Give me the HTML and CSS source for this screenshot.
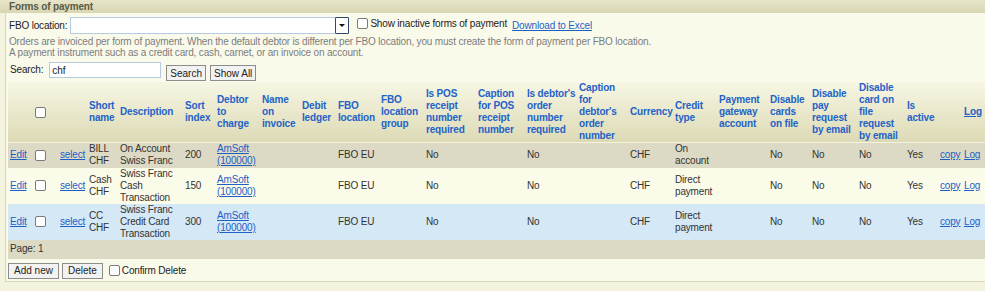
FILE: index.html
```html
<!DOCTYPE html>
<html lang="en">
<head>
    <meta charset="UTF-8">
    <title>Forms of payment</title>
    <link rel="stylesheet" href="styles.css">
</head>
<body>
    <div class="panel-title">Forms of payment</div>
    <div class="panel">
        <div class="filter-row">
            <label class="field-label">FBO location:</label>
            <div class="select-box"><span class="select-arrow"></span></div>
            <label class="check-label"><input type="checkbox" class="check"> Show inactive forms of payment</label>
            <a href="#" class="link">Download to Excel</a>
        </div>
        <p class="hint">
            Orders are invoiced per form of payment. When the default debtor is different per FBO location, you must create the form of payment per FBO location.<br>
            A payment instrument such as a credit card, cash, carnet, or an invoice on account.
        </p>
        <div class="search-row">
            <label class="search-label">Search:</label>
            <input type="text" class="search-input" value="chf">
            <button class="btn">Search</button>
            <button class="btn">Show All</button>
        </div>

        <table class="grid">
            <colgroup>
                <col style="width:25px"><col style="width:25px"><col style="width:29px"><col style="width:31px">
                <col style="width:65px"><col style="width:32px"><col style="width:45px"><col style="width:40px">
                <col style="width:36px"><col style="width:43px"><col style="width:45px"><col style="width:52px">
                <col style="width:49px"><col style="width:52px"><col style="width:51px"><col style="width:45px">
                <col style="width:44px"><col style="width:51px"><col style="width:42px"><col style="width:47px">
                <col style="width:48px"><col style="width:33px"><col style="width:24px"><col style="width:23px">
            </colgroup>
            <thead>
                <tr>
                    <th></th>
                    <th><input type="checkbox" class="check"></th>
                    <th></th>
                    <th>Short<br>name</th>
                    <th>Description</th>
                    <th>Sort<br>index</th>
                    <th>Debtor<br>to<br>charge</th>
                    <th>Name<br>on<br>invoice</th>
                    <th>Debit<br>ledger</th>
                    <th>FBO<br>location</th>
                    <th>FBO<br>location<br>group</th>
                    <th>Is POS<br>receipt<br>number<br>required</th>
                    <th>Caption<br>for POS<br>receipt<br>number</th>
                    <th>Is debtor's<br>order<br>number<br>required</th>
                    <th>Caption<br>for<br>debtor's<br>order<br>number</th>
                    <th>Currency</th>
                    <th>Credit<br>type</th>
                    <th>Payment<br>gateway<br>account</th>
                    <th>Disable<br>cards<br>on file</th>
                    <th>Disable<br>pay<br>request<br>by email</th>
                    <th>Disable<br>card on<br>file<br>request<br>by email</th>
                    <th>Is<br>active</th>
                    <th></th>
                    <th><a href="#" class="link">Log</a></th>
                </tr>
            </thead>
            <tbody>
                <tr class="row-alt">
                    <td><a href="#" class="link">Edit</a></td>
                    <td><input type="checkbox" class="check"></td>
                    <td><a href="#" class="link">select</a></td>
                    <td>BILL<br>CHF</td>
                    <td>On Account<br>Swiss Franc</td>
                    <td>200</td>
                    <td><a href="#" class="link">AmSoft<br>(100000)</a></td>
                    <td></td>
                    <td></td>
                    <td>FBO EU</td>
                    <td></td>
                    <td>No</td>
                    <td></td>
                    <td>No</td>
                    <td></td>
                    <td>CHF</td>
                    <td>On<br>account</td>
                    <td></td>
                    <td>No</td>
                    <td>No</td>
                    <td>No</td>
                    <td>Yes</td>
                    <td><a href="#" class="link">copy</a></td>
                    <td><a href="#" class="link">Log</a></td>
                </tr>
                <tr class="row">
                    <td><a href="#" class="link">Edit</a></td>
                    <td><input type="checkbox" class="check"></td>
                    <td><a href="#" class="link">select</a></td>
                    <td>Cash<br>CHF</td>
                    <td>Swiss Franc<br>Cash<br>Transaction</td>
                    <td>150</td>
                    <td><a href="#" class="link">AmSoft<br>(100000)</a></td>
                    <td></td>
                    <td></td>
                    <td>FBO EU</td>
                    <td></td>
                    <td>No</td>
                    <td></td>
                    <td>No</td>
                    <td></td>
                    <td>CHF</td>
                    <td>Direct<br>payment</td>
                    <td></td>
                    <td>No</td>
                    <td>No</td>
                    <td>No</td>
                    <td>Yes</td>
                    <td><a href="#" class="link">copy</a></td>
                    <td><a href="#" class="link">Log</a></td>
                </tr>
                <tr class="row-selected">
                    <td><a href="#" class="link">Edit</a></td>
                    <td><input type="checkbox" class="check"></td>
                    <td><a href="#" class="link">select</a></td>
                    <td>CC<br>CHF</td>
                    <td>Swiss Franc<br>Credit Card<br>Transaction</td>
                    <td>300</td>
                    <td><a href="#" class="link">AmSoft<br>(100000)</a></td>
                    <td></td>
                    <td></td>
                    <td>FBO EU</td>
                    <td></td>
                    <td>No</td>
                    <td></td>
                    <td>No</td>
                    <td></td>
                    <td>CHF</td>
                    <td>Direct<br>payment</td>
                    <td></td>
                    <td>No</td>
                    <td>No</td>
                    <td>No</td>
                    <td>Yes</td>
                    <td><a href="#" class="link">copy</a></td>
                    <td><a href="#" class="link">Log</a></td>
                </tr>
            </tbody>
            <tfoot>
                <tr class="pager">
                    <td colspan="24">Page: 1</td>
                </tr>
            </tfoot>
        </table>

        <div class="actions">
            <button class="btn">Add new</button>
            <button class="btn">Delete</button>
            <label class="check-label"><input type="checkbox" class="check"> Confirm Delete</label>
        </div>
    </div>
</body>
</html>
```
FILE: styles.css
```css
body {
    margin: 0;
    background-color: #f4f4de;
    font-family: "Liberation Sans", Arial, sans-serif;
    font-size: 10px;
    letter-spacing: -0.17px;
    color: #222;
}
.panel-title {
    height: 13px;
    line-height: 13px;
    padding-left: 9px;
    font-weight: bold;
    color: #5a5a44;
    background: linear-gradient(#e6e5c9, #d8d6b3);
}
.panel {
    margin-left: 5px;
    padding: 4px 0 1px 1px;
    background-color: #fafaeb;
    border-left: 1px solid #d9d8b6;
    border-bottom: 1px solid #d9d8b6;
}
.filter-row {
    display: flex;
    align-items: center;
    height: 17px;
    padding-left: 2px;
}
.select-box {
    width: 277px;
    height: 15px;
    margin-left: 3px;
    display: flex;
    justify-content: flex-end;
    background-color: white;
    border: 1px solid #b5cbe5;
}
.select-arrow {
    position: relative;
    width: 12px;
    height: 15px;
    margin: -1px -1px 0 0;
    background-color: white;
    border: 1px solid #34466c;
    border-radius: 1px;
}
.select-arrow::after {
    content: "";
    position: absolute;
    left: 3px;
    top: 6px;
    border-left: 3px solid transparent;
    border-right: 3px solid transparent;
    border-top: 3px solid #111;
}
.check {
    appearance: none;
    width: 11px;
    height: 11px;
    margin: 0;
    background-color: white;
    border: 1px solid #7a7a7a;
    border-radius: 2px;
    vertical-align: middle;
}
.check-label {
    display: inline-flex;
    align-items: center;
    gap: 2px;
    margin-left: 8px;
}
.filter-row .check-label {
    margin-top: -5px;
}
.filter-row .link {
    margin-left: 5px;
    margin-top: -1px;
}
.link {
    color: #1e5fc6;
    text-decoration: underline;
}
.hint {
    margin: 2px 0 0 2px;
    line-height: 11px;
    color: #7d7d7d;
}
.search-row {
    display: flex;
    align-items: flex-start;
    margin-top: 4px;
    height: 18px;
}
.search-label {
    line-height: 16px;
    margin-left: 3px;
}
.search-input {
    width: 106px;
    height: 14px;
    margin: 0 0 0 6px;
    padding: 0 2px;
    border: 1px solid #b5cbe5;
    font: inherit;
    color: #222;
}
.btn {
    height: 16px;
    margin: 3px 0 0 4px;
    padding: 0 4px;
    background-color: #f2f2f2;
    border: 1px solid #8c8c8c;
    border-radius: 0;
    font: inherit;
    line-height: 13px;
    color: #222;
}
.search-row .btn {
    padding: 0 3px;
}
.search-row .search-input + .btn {
    margin-left: 5px;
}
.grid {
    width: 977px;
    margin: 2px 0 0 1px;
    table-layout: fixed;
    border-collapse: collapse;
    line-height: 12px;
}
.grid th, .grid td {
    padding: 0 2px;
    text-align: left;
    vertical-align: middle;
    white-space: nowrap;
}
.grid thead tr {
    height: 60px;
    background: linear-gradient(#f7f6e3, #dcdab5);
    border-bottom: 1px solid #f4f3dc;
}
.grid th {
    font-weight: bold;
    color: #2462c8;
}
.grid td {
    color: #333;
}
.row-alt, .pager {
    background-color: #dcdac5;
}
.row-alt {
    height: 25px;
}
.row {
    background-color: #fbfbea;
}
.row-selected {
    background-color: #d4e8f6;
}
.pager td {
    height: 19px;
}
.actions {
    display: flex;
    align-items: center;
    margin-top: 3px;
    height: 18px;
}
.actions .btn {
    margin-top: 0;
    margin-left: 3px;
    padding: 0 5px;
}
.actions .btn:first-child {
    margin-left: 1px;
}
.actions .check-label {
    margin-left: 6px;
}
```
